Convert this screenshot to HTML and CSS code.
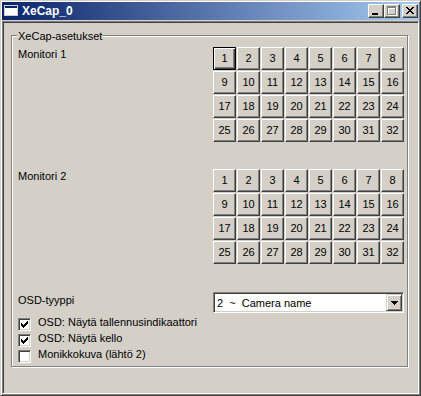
FILE: index.html
```html
<!DOCTYPE html>
<html lang="fi">
<head>
  <meta charset="UTF-8" />
  <title>XeCap_0</title>
  <link rel="stylesheet" href="styles.css">
</head>
<body>
  <div class="window">
    <div class="titlebar">
      <svg class="app-icon" width="16" height="16" viewBox="0 0 16 16" shape-rendering="crispEdges">
        <rect x="0" y="2" width="14" height="11" fill="#d4d0c8"/>
        <rect x="1" y="3" width="12" height="9" fill="#fff"/>
        <rect x="1" y="3" width="12" height="2" fill="#0a246a"/>
      </svg>
      <span class="title">XeCap_0</span>
      <div class="caption-buttons">
        <span class="caption-btn">
          <svg width="14" height="12" viewBox="0 0 14 12" shape-rendering="crispEdges">
            <rect x="3" y="8" width="6" height="2" fill="#000"/>
          </svg>
        </span>
        <span class="caption-btn">
          <svg width="14" height="12" viewBox="0 0 14 12" shape-rendering="crispEdges">
            <path d="M3 2h9v2h-9z M3 2h1v9h-1z M11 2h1v9h-1z M3 10h9v1h-9z" fill="#fff"/>
            <path d="M2 1h9v2h-9z M2 1h1v9h-1z M10 1h1v9h-1z M2 9h9v1h-9z" fill="#808080"/>
          </svg>
        </span>
        <span class="caption-btn close">
          <svg width="14" height="12" viewBox="0 0 14 12" shape-rendering="crispEdges">
            <path d="M3 2h2v1h-2z M9 2h2v1h-2z M4 3h2v1h-2z M8 3h2v1h-2z M5 4h4v1h-4z M6 5h2v1h-2z M5 6h4v1h-4z M4 7h2v1h-2z M8 7h2v1h-2z M3 8h2v1h-2z M9 8h2v1h-2z" fill="#000"/>
          </svg>
        </span>
      </div>
    </div>

    <div class="client">
      <div class="group">
        <span class="group-title">XeCap-asetukset</span>

        <div class="monitor-row">
          <span class="label">Monitori 1</span>
          <div class="screens" data-active="1"></div>
        </div>

        <div class="monitor-row">
          <span class="label">Monitori 2</span>
          <div class="screens"></div>
        </div>

        <div class="osd-row">
          <span class="label osd-label">OSD-tyyppi</span>
          <div class="combo">
            <span class="combo-value">2  ~  Camera name</span>
            <span class="combo-btn">
              <svg width="7" height="4" viewBox="0 0 7 4" shape-rendering="crispEdges">
                <path d="M0 0h7v1h-7z M1 1h5v1h-5z M2 2h3v1h-3z M3 3h1v1h-1z" fill="#000"/>
              </svg>
            </span>
          </div>
        </div>

        <div class="checks">
          <label class="check">
            <span class="checkbox checked"></span>
            <span class="check-text">OSD: Näytä tallennusindikaattori</span>
          </label>
          <label class="check">
            <span class="checkbox checked"></span>
            <span class="check-text">OSD: Näytä kello</span>
          </label>
          <label class="check">
            <span class="checkbox"></span>
            <span class="check-text">Monikkokuva (lähtö 2)</span>
          </label>
        </div>
      </div>
    </div>
  </div>

  <script>
    const checkMark = '<svg width="11" height="11" viewBox="0 0 11 11" shape-rendering="crispEdges">' +
      '<path d="M2 4h1v3h-1z M3 5h1v3h-1z M4 6h1v3h-1z M5 5h1v3h-1z M6 4h1v3h-1z M7 3h1v3h-1z M8 2h1v3h-1z" fill="#000"/></svg>'

    document.querySelectorAll('.checkbox.checked').forEach((box) => {
      box.innerHTML = checkMark
    })

    document.querySelectorAll('.screens').forEach((grid) => {
      for (let i = 1; i <= 32; i++) {
        const cell = document.createElement('div')
        cell.className = (grid.dataset.active == i) ? 'screen active' : 'screen'
        cell.textContent = i
        grid.appendChild(cell)
      }
    })
  </script>
</body>
</html>
```

FILE: styles.css
```css
* {
  margin: 0;
  padding: 0;
  box-sizing: border-box;
}

body {
  background: #d4d0c8;
  color: #000;
  font-family: "Liberation Sans", Arial, sans-serif;
  font-size: 11px;
  line-height: 13px;
}

/* window frame */
.window {
  width: 421px;
  height: 396px;
  display: flex;
  flex-direction: column;
  padding: 1px;
  border: 1px solid;
  border-color: #d4d0c8 #404040 #404040 #d4d0c8;
  box-shadow: inset 1px 1px #fff, inset -1px -1px #808080;
}

.titlebar {
  height: 18px;
  margin-bottom: 1px;
  display: flex;
  align-items: center;
  padding: 0 1px 0 2px;
  background: linear-gradient(to right, #0a246a, #a6caf0);
  color: #fff;
}

.app-icon {
  display: block;
  margin-right: 2px;
}

.title {
  flex: 1;
  font-size: 12px;
  font-weight: bold;
}

.caption-buttons {
  display: flex;
}

.caption-btn {
  display: block;
  width: 16px;
  height: 14px;
  background: #d4d0c8;
  border: 1px solid;
  border-color: #fff #404040 #404040 #fff;
  box-shadow: inset -1px -1px #808080;
}

.caption-btn svg {
  display: block;
}

.caption-btn.close {
  margin-left: 2px;
}

/* client area */
.client {
  flex: 1;
  padding: 13px 0 0 8px;
  border: 1px solid;
  border-color: #808080 #fff #fff #808080;
  box-shadow: inset 1px 1px #404040, inset -1px -1px #d4d0c8;
}

.group {
  position: relative;
  width: 397px;
  height: 332px;
  padding: 11px 3px 0 6px;
  border: 1px solid #808080;
  box-shadow: inset 1px 1px #fff, 1px 1px #fff;
}

.group-title {
  position: absolute;
  top: -6px;
  left: 5px;
  padding: 0 1px;
  background: #d4d0c8;
}

.monitor-row,
.osd-row {
  display: flex;
  justify-content: space-between;
  align-items: flex-start;
}

.monitor-row .label {
  padding-top: 1px;
}

.monitor-row + .monitor-row {
  margin-top: 27px;
}

.osd-row {
  margin-top: 28px;
}

.osd-label {
  padding-top: 2px;
}

/* monitor screen buttons */
.screens {
  display: grid;
  grid-template-columns: repeat(8, 23px);
  grid-auto-rows: 23px;
  gap: 1px;
}

.screen {
  display: flex;
  align-items: center;
  justify-content: center;
  background: #d4d0c8;
  border: 1px solid;
  border-color: #fff #404040 #404040 #fff;
  box-shadow: inset -1px -1px #808080;
}

.screen.active {
  border-color: #000;
  box-shadow: inset 1px 1px #fff, inset -1px -1px #404040, inset -2px -2px #808080;
}

/* combo box */
.combo {
  width: 191px;
  height: 21px;
  display: flex;
  padding: 1px;
  background: #fff;
  border: 1px solid;
  border-color: #808080 #fff #fff #808080;
  box-shadow: inset 1px 1px #404040, inset -1px -1px #d4d0c8;
}

.combo-value {
  flex: 1;
  padding: 3px 0 0 2px;
  white-space: pre;
}

.combo-btn {
  width: 16px;
  height: 17px;
  display: flex;
  align-items: center;
  justify-content: center;
  background: #d4d0c8;
  border: 1px solid;
  border-color: #d4d0c8 #404040 #404040 #d4d0c8;
  box-shadow: inset 1px 1px #fff, inset -1px -1px #808080;
}

.combo-btn svg {
  display: block;
}

/* check boxes */
.checks {
  margin-top: 5px;
  display: flex;
  flex-direction: column;
}

.check {
  height: 16px;
  display: flex;
  align-items: flex-start;
}

.checkbox {
  width: 13px;
  height: 13px;
  margin-right: 7px;
  background: #fff;
  border: 1px solid;
  border-color: #808080 #fff #fff #808080;
  box-shadow: inset 1px 1px #404040, inset -1px -1px #d4d0c8;
}

.checkbox svg {
  display: block;
}

.check-text {
  margin-top: -2px;
}
```
